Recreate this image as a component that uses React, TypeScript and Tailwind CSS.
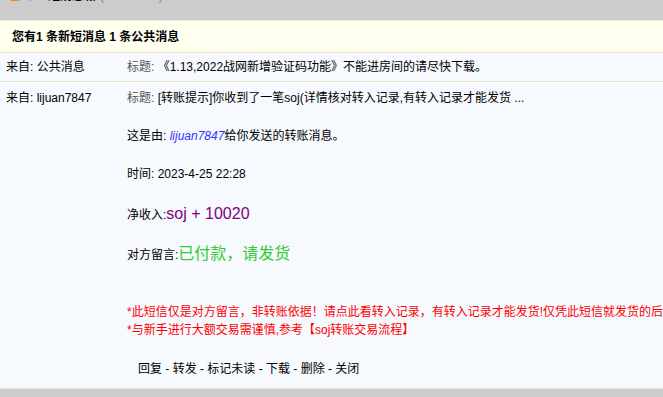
export default function App() {
  return (
    <div
      className="w-[663px] h-[397px] overflow-hidden bg-[#cccccc] text-[12px] text-black"
      style={{ fontFamily: '"Liberation Sans", "Noto Sans CJK SC", sans-serif' }}
    >
      {/* ── Window title bar (cut off at top) ─────────── */}
      <div className="h-[21px] overflow-hidden border-b border-[#f0ecd0]">
        <div className="flex items-center gap-1 pl-[10px] -mt-[12px] h-[16px] whitespace-nowrap">
          <span className="inline-block w-[10px] h-[10px] rounded-[2px] bg-[#f08a24]" />
          <span className="font-bold">个人短消息箱</span>
          <span className="text-[#888888]">(2013-2-18)</span>
        </div>
      </div>

      {/* ── Summary header ───────────────────────────── */}
      <div className="h-[32px] flex items-center pl-[12px] bg-[#fffff0] border-b border-[#e8e4c4] font-bold">
        您有1 条新短消息 1 条公共消息
      </div>

      {/* ── Public message ───────────────────────────── */}
      <div className="flex h-[29px] items-center bg-[#f6f9fe] border-b border-[#e8e4c4] whitespace-nowrap">
        <div className="w-[127px] pl-[6px] shrink-0">来自: 公共消息</div>
        <div>
          <span className="text-[#555555]">标题: </span>
          《1.13,2022战网新增验证码功能》不能进房间的请尽快下载。
        </div>
      </div>

      {/* ── Transfer message ─────────────────────────── */}
      <div className="flex h-[307px] bg-[#f6f9fe] border-b border-[#ede9c8] whitespace-nowrap overflow-hidden">
        <div className="w-[127px] pl-[6px] pt-[7px] shrink-0 leading-[18px]">来自: lijuan7847</div>
        <div className="pt-[7px] leading-[18px]">
          <div>
            <span className="text-[#555555]">标题: </span>
            [转账提示]你收到了一笔soj(详情核对转入记录,有转入记录才能发货 ...
          </div>
          <div className="mt-[20px]">
            这是由: <span className="italic text-[#3333ff]">lijuan7847</span>给你发送的转账消息。
          </div>
          <div className="mt-[20px]">时间: 2023-4-25 22:28</div>
          <div className="mt-[22px] flex items-baseline h-[22px]">
            <span>净收入:</span>
            <span className="text-[16px] text-[#800080]">soj + 10020</span>
          </div>
          <div className="mt-[18px] flex items-baseline h-[22px]">
            <span>对方留言:</span>
            <span className="text-[16px] text-[#33cc33]">已付款，请发货</span>
          </div>
          <div className="mt-[36px] text-[#ff0000]">
            *此短信仅是对方留言，非转账依据！请点此看转入记录，有转入记录才能发货!仅凭此短信就发货的后果自负
          </div>
          <div className="text-[#ff0000]">*与新手进行大额交易需谨慎,参考【soj转账交易流程】</div>
          <div className="mt-[21px] pl-[11px]">回复 - 转发 - 标记未读 - 下载 - 删除 - 关闭</div>
        </div>
      </div>
    </div>
  )
}
